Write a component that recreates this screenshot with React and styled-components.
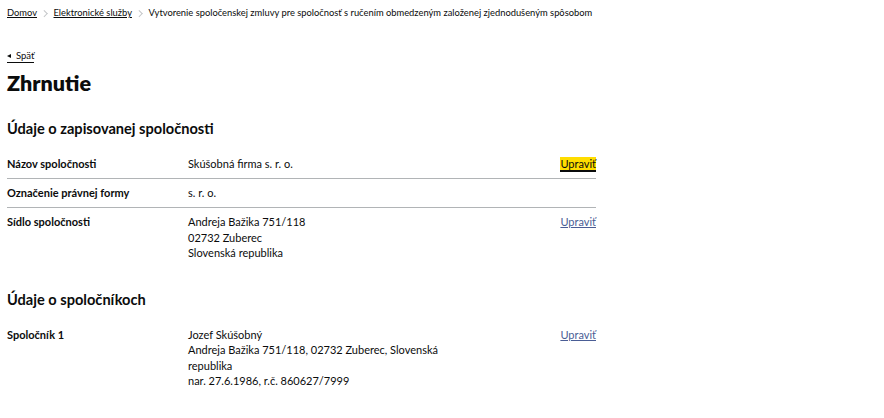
import React from 'react';
import styled, { createGlobalStyle } from 'styled-components';

const GlobalStyle = createGlobalStyle`
  body {
    margin: 0;
    background: #ffffff;
    font-family: Lato, "Noto Sans", sans-serif;
    color: #0b0c0c;
  }
`;

const Page = styled.div`
  width: 589px;
  padding: 6px 0 0 7px;
`;

const Breadcrumbs = styled.nav`
  display: flex;
  align-items: center;
  font-size: 9.35px;
  line-height: 14px;
  white-space: nowrap;
`;

const Crumb = styled.a`
  color: #0b0c0c;
  text-decoration: underline;
  text-underline-offset: 1px;
`;

const Chevron = styled.span`
  display: inline-block;
  width: 3.5px;
  height: 3.5px;
  margin: 0 7px 0 5px;
  border-top: 1px solid #c4c6c8;
  border-right: 1px solid #c4c6c8;
  transform: rotate(45deg);
`;

const Current = styled.span`
  color: #0b0c0c;
`;

const BackLink = styled.a`
  display: inline-flex;
  align-items: center;
  gap: 5px;
  margin-top: 30px;
  font-size: 9.5px;
  line-height: 12px;
  color: #0b0c0c;
  text-decoration: none;
  border-bottom: 1px solid #0b0c0c;
`;

const Arrow = styled.span`
  width: 0;
  height: 0;
  border-top: 2.5px solid transparent;
  border-bottom: 2.5px solid transparent;
  border-right: 4px solid #0b0c0c;
`;

const Title = styled.h1`
  margin: 5px 0 0;
  font-size: 21.5px;
  line-height: 30px;
  font-weight: 800;
`;

const SectionTitle = styled.h2`
  margin: ${(p) => p.$top}px 0 0;
  font-size: 14.6px;
  line-height: 20px;
  font-weight: 700;
`;

const List = styled.dl`
  margin: 17px 0 0;
`;

const Row = styled.div`
  display: grid;
  grid-template-columns: 181px 250px 1fr;
  align-items: start;
  padding: ${(p) => (p.$first ? '0' : '6px')} 0 ${(p) => (p.$first ? '6px' : '7px')};
  border-bottom: ${(p) => (p.$last ? 'none' : '1px solid #b1b4b6')};
`;

const Key = styled.dt`
  font-size: 11px;
  line-height: 15.5px;
  font-weight: 700;
`;

const Value = styled.dd`
  margin: 0;
  font-size: 11px;
  line-height: 15.5px;
`;

const Actions = styled.dd`
  margin: 0;
  text-align: right;
  font-size: 11px;
  line-height: 15.5px;
`;

const EditLink = styled.a`
  color: ${(p) => (p.$focus ? '#0b0c0c' : '#4a5d95')};
  background: ${(p) => (p.$focus ? '#ffdd00' : 'transparent')};
  text-decoration: ${(p) => (p.$focus ? 'none' : 'underline')};
  box-shadow: ${(p) => (p.$focus ? '0 2px 0 #0b0c0c' : 'none')};
  text-underline-offset: 1px;
`;

const company = [
  { key: 'Názov spoločnosti', value: ['Skúšobná firma s. r. o.'], edit: true, focus: true },
  { key: 'Označenie právnej formy', value: ['s. r. o.'] },
  { key: 'Sídlo spoločnosti', value: ['Andreja Bažika 751/118', '02732 Zuberec', 'Slovenská republika'], edit: true },
];

const partners = [
  {
    key: 'Spoločník 1',
    value: ['Jozef Skúšobný', 'Andreja Bažika 751/118, 02732 Zuberec, Slovenská republika', 'nar. 27.6.1986, r.č. 860627/7999'],
    edit: true,
  },
];

const SummaryList = ({ rows }) => (
  <List>
    {rows.map((r, i) => (
      <Row key={r.key} $first={i === 0} $last={i === rows.length - 1}>
        <Key>{r.key}</Key>
        <Value>
          {r.value.map((line) => (
            <div key={line}>{line}</div>
          ))}
        </Value>
        <Actions>{r.edit && <EditLink href="#" $focus={r.focus}>Upraviť</EditLink>}</Actions>
      </Row>
    ))}
  </List>
);

const App = () => (
  <>
    <GlobalStyle />
    <Page>
      <Breadcrumbs>
        <Crumb href="#">Domov</Crumb>
        <Chevron />
        <Crumb href="#">Elektronické služby</Crumb>
        <Chevron />
        <Current>Vytvorenie spoločenskej zmluvy pre spoločnosť s ručením obmedzeným založenej zjednodušeným spôsobom</Current>
      </Breadcrumbs>
      <BackLink href="#">
        <Arrow />
        Späť
      </BackLink>
      <Title>Zhrnutie</Title>
      <SectionTitle $top={21}>Údaje o zapisovanej spoločnosti</SectionTitle>
      <SummaryList rows={company} />
      <SectionTitle $top={22}>Údaje o spoločníkoch</SectionTitle>
      <SummaryList rows={partners} />
    </Page>
  </>
);

export default App;
